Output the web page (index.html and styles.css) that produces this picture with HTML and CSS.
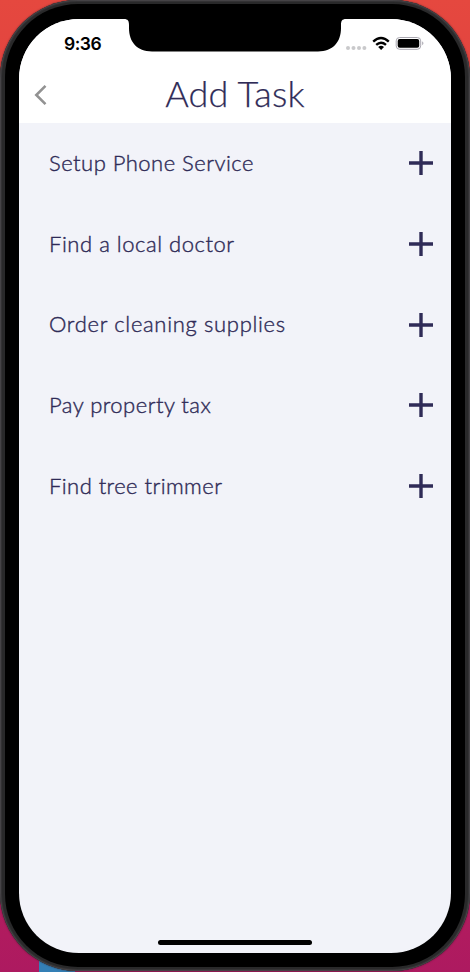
FILE: index.html
```html
<!DOCTYPE html>
<html lang="en">
<head>
<meta charset="utf-8">
<title>Add Task</title>
<link rel="stylesheet" href="styles.css">
</head>
<body>
<div class="wallpaper-accent"></div>
<div class="device">
<div class="bezel">
<main class="screen">
<svg class="notch" width="222" height="33" viewBox="0 0 222 33"><path d="M0 0C4 0 5 2 5 6V9C5 23 13 32.4 28 32.4H194C209 32.4 217 23 217 9V6C217 2 218 0 222 0Z"/></svg>
<div class="status">
<span class="time">9:36</span>
<div class="indicators">
<svg width="80" height="16" viewBox="0 0 80 16">
<g fill="#c9c9cb"><circle cx="3" cy="12" r="2"/><circle cx="8.5" cy="12" r="2"/><circle cx="14" cy="12" r="2"/><circle cx="19.4" cy="12" r="2"/></g>
<g fill="none" stroke="#000" stroke-width="2.4"><path d="M28.2 5.6Q36 -1.4 43.8 5.6"/><path d="M31.2 8.8Q36 4.5 41 8.8"/></g>
<path d="M33.2 11Q36.1 8.6 39 11L36.1 14Z"/>
<rect x="51.2" y="1.5" width="24.5" height="11.8" rx="3.4" fill="none" stroke="#a9a7b0"/>
<rect x="52.7" y="3" width="21.5" height="8.8" rx="2"/>
<path d="M77.2 5.3Q79.7 7.3 77.2 9.3Z" fill="#a9a7b0"/>
</svg>
</div>
</div>
<header class="header">
<svg class="back" width="14" height="22" viewBox="0 0 14 22"><path d="M11.5 1.8L2.3 11L11.5 20.2"/></svg>
<h1>Add Task</h1>
</header>
<ul class="tasks">
<li><span class="t1">Setup Phone Service</span><svg class="plus" width="24" height="24" viewBox="0 0 24 24"><path d="M12 0V24M0 12H24"/></svg></li>
<li><span class="t2">Find a local doctor</span><svg class="plus" width="24" height="24" viewBox="0 0 24 24"><path d="M12 0V24M0 12H24"/></svg></li>
<li><span class="t3">Order cleaning supplies</span><svg class="plus" width="24" height="24" viewBox="0 0 24 24"><path d="M12 0V24M0 12H24"/></svg></li>
<li><span class="t4">Pay property tax</span><svg class="plus" width="24" height="24" viewBox="0 0 24 24"><path d="M12 0V24M0 12H24"/></svg></li>
<li><span class="t5">Find tree trimmer</span><svg class="plus" width="24" height="24" viewBox="0 0 24 24"><path d="M12 0V24M0 12H24"/></svg></li>
</ul>
<div class="home"></div>
</main>
</div>
</div>
</body>
</html>
```
FILE: styles.css
```css
* { box-sizing: border-box; }
body {
  margin: 0;
  width: 470px;
  height: 972px;
  overflow: hidden;
  background: linear-gradient(#e5483f 0, #e0403f 15%, #b91e5c 85%, #ad1a60 100%);
}
.wallpaper-accent {
  position: absolute;
  left: 39px;
  top: 960px;
  width: 36px;
  height: 12px;
  background: #347fb5;
}
.device {
  position: relative;
  height: 971px;
  padding: 4px 5px;
  border-radius: 78px;
  background: #29292a;
  box-shadow: inset 0 0 0 1px #454346, inset 0 0 0 2px #333234, 0 0 2px #301a25;
}
.bezel {
  height: 963px;
  padding: 15px 14px 14px;
  border-radius: 73px;
  background: #000;
}
.screen {
  position: relative;
  display: flex;
  flex-direction: column;
  height: 934px;
  overflow: hidden;
  border-radius: 60px;
  background: #f2f3f9;
  color: #2f2b57;
  font-family: Lato, sans-serif;
}
.notch { position: absolute; top: 0; left: 105px; }
.status {
  display: flex;
  justify-content: space-between;
  height: 50px;
  padding: 14px 26px 0 45px;
  background: #fff;
  color: #000;
}
.time { font: 600 17.5px/22px Inter, sans-serif; letter-spacing: -.5px; }
.indicators { height: 16px; padding-top: 3px; }
.indicators svg { display: block; }
.header {
  display: grid;
  grid-template-columns: 1fr auto 1fr;
  align-items: center;
  height: 54px;
  padding: 0 15px;
  background: #fff;
}
.back { margin-top: -3px; fill: none; stroke: #929292; stroke-width: 2.6; }
h1 { margin: -7px 0 0; font-size: 36px; line-height: 44px; font-weight: 300; letter-spacing: .2px; -webkit-text-stroke: .25px #2f2b57; }
.tasks { margin: 0; padding: 0; list-style: none; }
.tasks li {
  display: flex;
  align-items: center;
  justify-content: space-between;
  height: 80.7px;
  padding: 0 18px 0 30px;
  font-size: 22px;
  line-height: 28px;
}
.tasks span {
  margin-top: -1px;
  font-weight: 300;
  -webkit-text-stroke: .4px #2f2b57;
}
.tasks .t1 { letter-spacing: .48px; }
.tasks .t2 { letter-spacing: .54px; }
.tasks .t3 { letter-spacing: .68px; }
.tasks .t4 { letter-spacing: .47px; }
.tasks .t5 { letter-spacing: .44px; }
.plus { stroke: #2f2b57; stroke-width: 3.4; }
.home {
  width: 154px;
  height: 5px;
  margin: auto auto 8px 139px;
  border-radius: 3px;
  background: #000;
}
```
